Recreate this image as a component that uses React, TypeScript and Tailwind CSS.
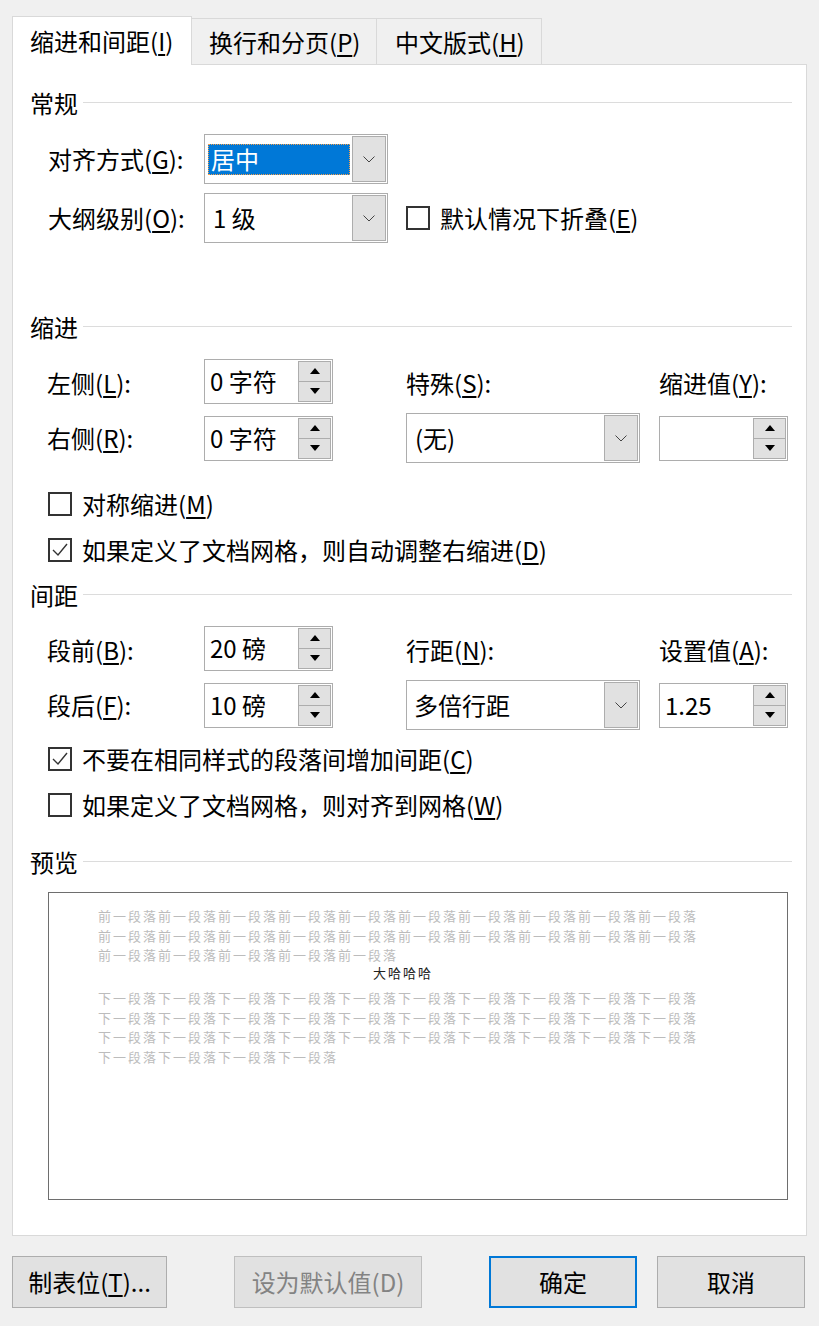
import React from "react";

const U = ({ c }: { c: string }) => (
  <span className="underline underline-offset-[3px] decoration-[1.5px]">{c}</span>
);

const Chevron = () => (
  <svg width="12" height="7" viewBox="0 0 12 7">
    <polyline points="0.5,0.5 6,6 11.5,0.5" fill="none" stroke="#444" strokeWidth="1" />
  </svg>
);

const Combo = ({
  w,
  text,
  selected,
  pl = 8,
}: {
  w: string;
  text: string;
  selected?: boolean;
  pl?: number;
}) => (
  <div className={`${w} h-[50px] flex border border-[#adadad] bg-white shrink-0`}>
    <div className="flex-1 flex items-center min-w-0">
      {selected ? (
        <div className="ml-[3px] mr-[1px] flex-1 h-[31px] bg-[#0078d7] border border-dotted border-[#f7a04a] flex items-center pl-[2px] text-white">
          {text}
        </div>
      ) : (
        <span style={{ paddingLeft: pl }}>{text}</span>
      )}
    </div>
    <div className="m-px w-[34px] bg-[#e1e1e1] border border-[#adadad] flex items-center justify-center">
      <Chevron />
    </div>
  </div>
);

const Up = () => (
  <svg width="10" height="6" viewBox="0 0 10 6">
    <polygon points="5,0 10,6 0,6" fill="#000" />
  </svg>
);
const Down = () => (
  <svg width="10" height="6" viewBox="0 0 10 6">
    <polygon points="0,0 10,0 5,6" fill="#000" />
  </svg>
);

const Spinner = ({ text }: { text: string }) => (
  <div className="w-[129px] h-[45px] flex border border-[#adadad] bg-white shrink-0">
    <div className="flex-1 flex items-center pl-[5px]">{text}</div>
    <div className="m-px w-[33px] flex flex-col">
      <div className="flex-1 bg-[#e1e1e1] border border-[#adadad] flex items-center justify-center">
        <Up />
      </div>
      <div className="flex-1 bg-[#e1e1e1] border border-[#adadad] border-t-0 flex items-center justify-center">
        <Down />
      </div>
    </div>
  </div>
);

const Check = ({ checked }: { checked?: boolean }) => (
  <div className="w-[24px] h-[24px] border-2 border-[#333] bg-white shrink-0 flex items-center justify-center">
    {checked && (
      <svg width="20" height="20" viewBox="0 0 20 20">
        <polyline points="3,10 8,15 17,4" fill="none" stroke="#333" strokeWidth="1.4" />
      </svg>
    )}
  </div>
);

const Header = ({ t, mt }: { t: string; mt: string }) => (
  <div className={`${mt} h-[26px] flex items-center pl-[17px] pr-[14px]`}>
    <span>{t}</span>
    <div className="flex-1 h-px bg-[#dcdcdc] ml-[5px] -mt-[2px]" />
  </div>
);

const CheckRow = ({
  checked,
  children,
  mt = "",
}: {
  checked?: boolean;
  children: React.ReactNode;
  mt?: string;
}) => (
  <div className={`${mt} h-[46px] flex items-center pl-[35px]`}>
    <Check checked={checked} />
    <span className="ml-[10px]">{children}</span>
  </div>
);

const before = "前一段落".repeat(10);
const after = "下一段落".repeat(10);

export default function App() {
  return (
    <div className="w-[819px] h-[1326px] bg-[#f0f0f0] font-['Noto_Sans_CJK_SC',sans-serif] text-[24px] leading-none text-black overflow-hidden">
      {/* Tabs */}
      <div className="flex items-end pl-[12px] pt-[16px] h-[65px]">
        <div className="relative z-10 h-[49px] w-[180px] bg-white border border-b-0 border-[#d9d9d9] flex items-center pl-[17px]">
          <span>
            缩进和间距(<U c="I" />)
          </span>
        </div>
        <div className="h-[46px] mb-px w-[185px] border-t border-r border-[#d9d9d9] flex items-center pl-[17px]">
          <span>
            换行和分页(<U c="P" />)
          </span>
        </div>
        <div className="h-[46px] mb-px w-[165px] border-t border-r border-[#d9d9d9] flex items-center pl-[18px]">
          <span>
            中文版式(<U c="H" />)
          </span>
        </div>
      </div>

      {/* Panel */}
      <div className="-mt-px mx-[12px] h-[1172px] border border-[#d9d9d9] bg-white flex flex-col">
        <Header t="常规" mt="mt-[25px]" />
        <div className="mt-[18px] h-[50px] flex items-center pl-[35px]">
          <span className="w-[156px] shrink-0">
            对齐方式(<U c="G" />):
          </span>
          <Combo w="w-[184px]" text="居中" selected />
        </div>
        <div className="mt-[9px] h-[50px] flex items-center pl-[35px]">
          <span className="w-[156px] shrink-0">
            大纲级别(<U c="O" />):
          </span>
          <Combo w="w-[184px]" text="1 级" pl={8} />
          <div className="ml-[18px] flex items-center">
            <Check />
            <span className="ml-[10px]">
              默认情况下折叠(<U c="E" />)
            </span>
          </div>
        </div>

        <Header t="缩进" mt="mt-[71px]" />
        <div className="mt-[16px] h-[50px] flex items-center pl-[34px]">
          <span className="w-[157px] shrink-0 mt-[4px]">
            左侧(<U c="L" />):
          </span>
          <Spinner text="0 字符" />
          <span className="ml-[73px] w-[253px] shrink-0 mt-[4px]">
            特殊(<U c="S" />):
          </span>
          <span className="mt-[4px]">
            缩进值(<U c="Y" />):
          </span>
        </div>
        <div className="mt-[7px] h-[50px] flex items-center pl-[34px]">
          <span className="w-[157px] shrink-0">
            右侧(<U c="R" />):
          </span>
          <Spinner text="0 字符" />
          <div className="ml-[73px]">
            <Combo w="w-[234px]" text="(无)" pl={8} />
          </div>
          <div className="ml-[19px]">
            <Spinner text="" />
          </div>
        </div>
        <CheckRow mt="mt-[18px]">
          对称缩进(<U c="M" />)
        </CheckRow>
        <CheckRow checked>
          如果定义了文档网格，则自动调整右缩进(<U c="D" />)
        </CheckRow>

        <Header t="间距" mt="mt-[9px]" />
        <div className="mt-[15px] h-[50px] flex items-center pl-[34px]">
          <span className="w-[157px] shrink-0 mt-[4px]">
            段前(<U c="B" />):
          </span>
          <Spinner text="20 磅" />
          <span className="ml-[73px] w-[253px] shrink-0 mt-[4px]">
            行距(<U c="N" />):
          </span>
          <span className="mt-[4px]">
            设置值(<U c="A" />):
          </span>
        </div>
        <div className="mt-[7px] h-[50px] flex items-center pl-[34px]">
          <span className="w-[157px] shrink-0">
            段后(<U c="F" />):
          </span>
          <Spinner text="10 磅" />
          <div className="ml-[73px]">
            <Combo w="w-[234px]" text="多倍行距" pl={7} />
          </div>
          <div className="ml-[19px]">
            <Spinner text="1.25" />
          </div>
        </div>
        <CheckRow checked mt="mt-[6px]">
          不要在相同样式的段落间增加间距(<U c="C" />)
        </CheckRow>
        <CheckRow>
          如果定义了文档网格，则对齐到网格(<U c="W" />)
        </CheckRow>

        <Header t="预览" mt="mt-[21px]" />
        <div className="mt-[17px] ml-[35px] w-[740px] h-[308px] border border-[#6e6e6e] bg-white pl-[49px] pt-[13px] text-[13px] leading-[19.5px] tracking-[2px] text-[#bcbcbc] whitespace-nowrap">
          <div>{before}</div>
          <div>{before}</div>
          <div>{"前一段落".repeat(5)}</div>
          <div className="w-[610px] text-center text-[#222] leading-[18px] -mt-[0.5px]">大哈哈哈</div>
          <div className="mt-[6px]">{after}</div>
          <div>{after}</div>
          <div>{after}</div>
          <div>{"下一段落".repeat(4)}</div>
        </div>
      </div>

      {/* Buttons */}
      <div className="mt-[20px] px-[12px] flex">
        <div className="w-[155px] h-[52px] bg-[#e1e1e1] border border-[#adadad] flex items-center justify-center">
          <span>
            制表位(<U c="T" />)...
          </span>
        </div>
        <div className="ml-[67px] w-[188px] h-[52px] bg-[#e1e1e1] border border-[#bfbfbf] flex items-center justify-center text-[#838383]">
          设为默认值(D)
        </div>
        <div className="ml-[67px] w-[148px] h-[52px] bg-[#e1e1e1] border-2 border-[#0078d7] flex items-center justify-center">
          确定
        </div>
        <div className="ml-[20px] w-[148px] h-[52px] bg-[#e1e1e1] border border-[#adadad] flex items-center justify-center">
          取消
        </div>
      </div>
    </div>
  );
}
